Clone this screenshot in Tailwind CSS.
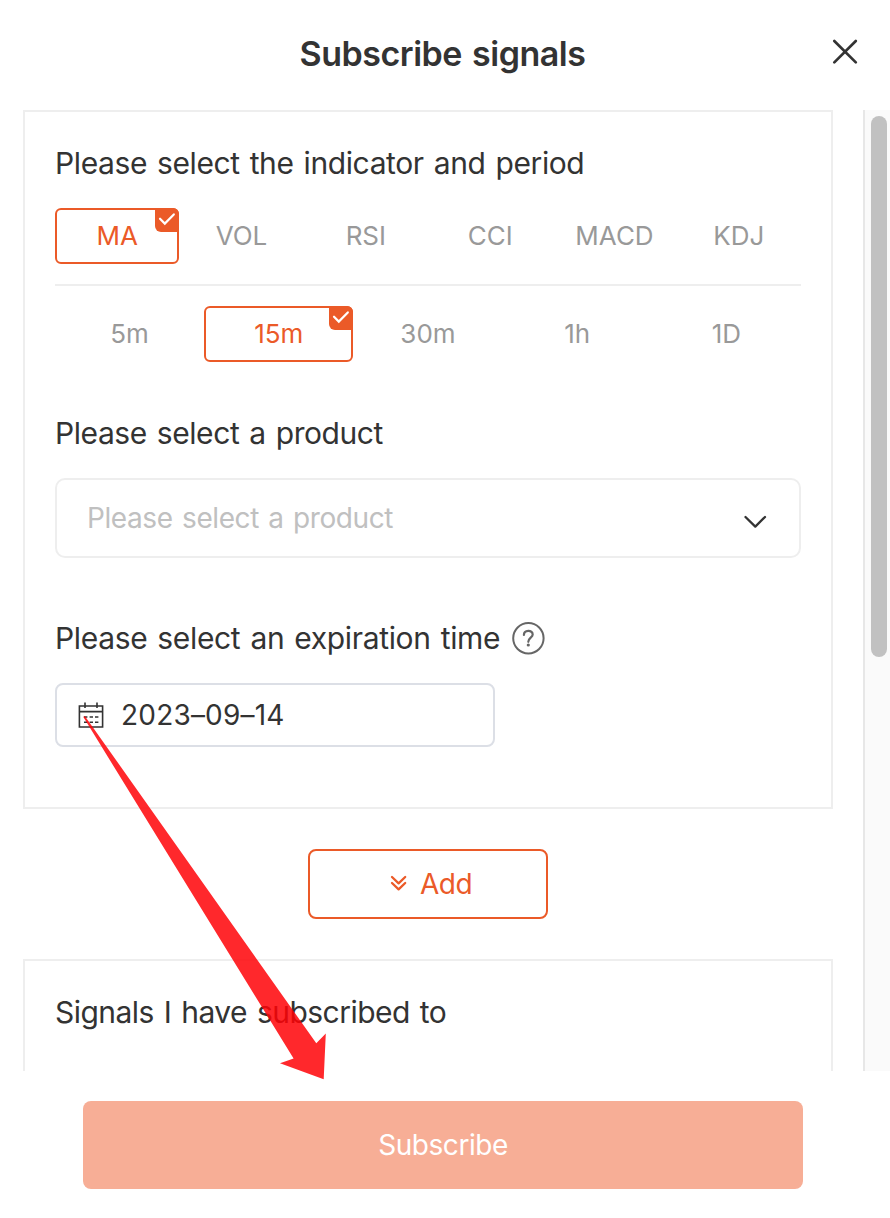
<!DOCTYPE html>
<html lang="en">
<head>
<meta charset="utf-8">
<title>Subscribe signals</title>
<script src="https://cdn.jsdelivr.net/npm/@tailwindcss/browser@4"></script>
</head>
<body class="bg-white">
<div class="relative flex h-[1218px] w-[890px] flex-col overflow-hidden bg-white font-['Inter','Liberation_Sans',sans-serif] text-[#333]">
  <header class="relative flex h-[110px] shrink-0 justify-center pr-[5px]">
    <h1 class="h-[107px] text-[34px] leading-[107px] font-semibold tracking-[-0.47px] [word-spacing:2px]">Subscribe signals</h1>
    <button class="absolute top-[38px] right-[31px]" aria-label="Close">
      <svg class="block" width="28" height="28" viewBox="0 0 28 28" fill="none" stroke="#333" stroke-width="2.7" stroke-linecap="round"><path d="M3.3 3L24.8 24.4M24.8 3L3.3 24.4"/></svg>
    </button>
  </header>

  <div class="flex h-[961px] shrink-0 overflow-hidden">
    <main class="w-[863px] shrink-0 pr-[30px] pl-[23px]">
      <section class="h-[699px] border-2 border-[#eee] px-[30px] pt-[30px]">
        <h2 class="h-[42px] text-[30px] leading-[42px] tracking-[-0.4px] whitespace-nowrap [word-spacing:2px]">Please select the indicator and period</h2>
        <div class="mt-6 grid grid-cols-6 border-b-2 border-[#eee] pb-5 text-center text-[26px] leading-[56px] text-[#999]">
          <div class="relative h-14 rounded-md border-2 border-[#eb5a28] leading-[52px] text-[#eb5a28]">MA
            <span class="absolute -top-0.5 -right-0.5 h-6 w-6 rounded-tr-md rounded-bl-md bg-[#eb5a28]"><svg class="block" width="24" height="24" viewBox="0 0 24 24" fill="none" stroke="#fff" stroke-width="2.2" stroke-linecap="round"><path d="M5 10.7L9.8 15.6L18.8 6.4"/></svg></span>
          </div>
          <div>VOL</div><div>RSI</div><div>CCI</div><div>MACD</div><div>KDJ</div>
        </div>
        <div class="mt-5 grid grid-cols-5 text-center text-[26px] leading-[56px] text-[#999]">
          <div>5m</div>
          <div class="relative h-14 rounded-md border-2 border-[#eb5a28] leading-[52px] text-[#eb5a28]">15m
            <span class="absolute -top-0.5 -right-0.5 h-6 w-6 rounded-tr-md rounded-bl-md bg-[#eb5a28]"><svg class="block" width="24" height="24" viewBox="0 0 24 24" fill="none" stroke="#fff" stroke-width="2.2" stroke-linecap="round"><path d="M5 10.7L9.8 15.6L18.8 6.4"/></svg></span>
          </div>
          <div>30m</div><div>1h</div><div>1D</div>
        </div>

        <h2 class="mt-[50px] h-[42px] text-[30px] leading-[42px] tracking-[-0.43px] [word-spacing:2px]">Please select a product</h2>
        <div class="mt-6 flex h-20 items-center justify-between rounded-[10px] border-2 border-[#eee] pr-[31px] pl-[30px]">
          <span class="text-[28px] tracking-[-0.42px] text-[#c0c0c0] [word-spacing:2px]">Please select a product</span>
          <svg class="mt-2" width="26" height="16" viewBox="0 0 26 16" fill="none" stroke="#333" stroke-width="2.3" stroke-linecap="round" stroke-linejoin="round"><path d="M3.5 3L13.3 12.6L23 3"/></svg>
        </div>

        <div class="mt-[59px] flex h-[42px] items-center">
          <h2 class="text-[30px] leading-[42px] tracking-[-0.35px] whitespace-nowrap [word-spacing:2px]">Please select an expiration time</h2>
          <svg class="ml-[11px]" width="34" height="34" viewBox="0 0 34 34" fill="none" stroke="#666" stroke-width="2"><circle cx="17.4" cy="17.3" r="15.2"/><path d="M12.9 14C12.9 8.6 21.7 8.6 21.7 13.5C21.7 16.6 17.3 16.8 17.3 20.8" stroke-width="2.2" stroke-linecap="round"/><circle cx="17.3" cy="24" r="1.6" fill="#666" stroke="none"/></svg>
        </div>
        <div class="mt-6 flex h-16 w-[440px] items-center rounded-lg border-2 border-[#dcdfe6] pl-[20px]">
          <svg width="28" height="28" viewBox="0 0 28 28" fill="none" stroke="#333" stroke-width="1.6"><path d="M2.4 5H25.6V26H2.4ZM2.4 10.6H25.6M8 1.5V7M20 1.5V7"/><path d="M7 16H10.4M12.6 16H16M18 16H21.4M7 21.2H10.4M12.6 21.2H16M18 21.2H21.4"/></svg>
          <span class="ml-4 text-[28px] tracking-[0.2px]">2023–09–14</span>
        </div>
      </section>

      <div class="mt-10 flex justify-center">
        <button class="flex h-[70px] w-[240px] items-center justify-center rounded-lg border-2 border-[#eb5a28] pl-[5px] text-[28px] text-[#eb5a28]">
          <svg class="mr-[13px]" width="18" height="18" viewBox="0 0 18 18" fill="none" stroke="#eb5a28" stroke-width="2.3" stroke-linecap="round" stroke-linejoin="round"><path d="M3 2L9.6 8.4L16.2 2M3 8L9.6 14.4L16.2 8"/></svg>
          <span class="tracking-[-0.5px]">Add</span>
        </button>
      </div>

      <section class="mt-10 h-[200px] border-2 border-[#eee] px-[30px] pt-[30px]">
        <h2 class="h-[42px] text-[30px] leading-[42px] tracking-[-0.53px] whitespace-nowrap [word-spacing:2px]">Signals I have subscribed to</h2>
      </section>
    </main>
    <div class="flex-1 border-l-2 border-[#e7e7e7] bg-[#fafafa] pt-1.5 pl-1.5">
      <div class="h-[541px] w-4 rounded-full bg-[#c1c1c1]"></div>
    </div>
  </div>

  <footer class="pt-[30px] pl-[83px]">
    <button class="block h-[88px] w-[720px] rounded-lg bg-[#f7ae96] text-[28px] tracking-[-0.45px] text-white">Subscribe</button>
  </footer>

  <svg class="pointer-events-none absolute top-0 left-0" width="890" height="1218" viewBox="0 0 890 1218"><path d="M83.2 716.8L85 716.2L316.3 1043.3L325.8 1033.5L323.7 1079.3L280 1063.3L293.6 1058.5Z" fill="#ff0207" fill-opacity="0.85"/></svg>
</div>
</body>
</html>
